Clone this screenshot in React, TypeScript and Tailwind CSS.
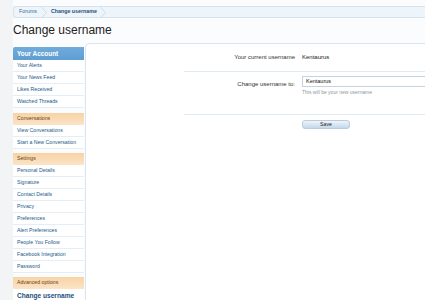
import React from "react";

const font = { fontFamily: '"Liberation Sans", Arial, sans-serif' };

function Chevron() {
  return (
    <svg width="6" height="11" viewBox="0 0 6 11" className="shrink-0">
      <polyline points="0.5,0 5.5,5.5 0.5,11" fill="none" stroke="#cfdde9" strokeWidth="1" />
    </svg>
  );
}

function Item({ children, last }: { children: React.ReactNode; last?: boolean }) {
  return (
    <div className={"h-[12px] flex items-center pl-[4px] text-[5.2px] text-[#1d5a8c] bg-white " + (last ? "" : "border-b border-[#e6eef5]")}>
      {children}
    </div>
  );
}

function SectionHead({ children, gap }: { children: React.ReactNode; gap: "a" | "b" }) {
  return (
    <div className={"h-[12px] flex items-center pl-[4px] text-[5.2px] text-[#6a3d12] bg-gradient-to-b from-[#f8d3a3] to-[#fbe4c8] " + (gap === "a" ? "mt-[5px]" : "mt-[4px]")}>
      {children}
    </div>
  );
}

export default function App() {
  return (
    <div className="w-[425px] h-[300px] overflow-hidden flex bg-[#f3f4f5]" style={font}>
      <div className="w-[13px] shrink-0" />
      <div className="flex-1 bg-[#fbfcfd] flex flex-col min-w-0">
        <div className="mt-[6px] h-[12px] rounded-l-[3px] border border-r-0 border-[#d6e2ec] bg-[#eef5fa] flex items-center">
          <span className="pl-[5px] pr-[4px] text-[5.3px] text-[#3a6d98]">Forums</span>
          <Chevron />
          <span className="pl-[4px] pr-[3px] text-[5.3px] text-[#24507a] font-bold">Change username</span>
          <Chevron />
        </div>
        <div className="mt-[5px] text-[12px] leading-[14px] text-[#222]">Change username</div>
        <div className="flex mt-[6px] flex-1">
          <div className="w-[71px] shrink-0 pt-[4px]">
            <div className="h-[13px] flex items-center pl-[4px] text-[6.4px] font-bold text-white bg-gradient-to-b from-[#70abdc] to-[#5f9ed2] rounded-tl-[2px]">
              Your Account
            </div>
            <Item>Your Alerts</Item>
            <Item>Your News Feed</Item>
            <Item>Likes Received</Item>
            <Item>Watched Threads</Item>
            <SectionHead gap="a">Conversations</SectionHead>
            <Item>View Conversations</Item>
            <Item>Start a New Conversation</Item>
            <SectionHead gap="b">Settings</SectionHead>
            <Item>Personal Details</Item>
            <Item>Signature</Item>
            <Item>Contact Details</Item>
            <Item>Privacy</Item>
            <Item>Preferences</Item>
            <Item>Alert Preferences</Item>
            <Item>People You Follow</Item>
            <Item>Facebook Integration</Item>
            <Item>Password</Item>
            <SectionHead gap="b">Advanced options</SectionHead>
            <div className="h-[13px] flex items-center pl-[4px] text-[6.6px] font-bold text-[#1d4f80] bg-white">
              Change username
            </div>
          </div>
          <div className="flex-1 ml-[1px] bg-white border-l border-t border-[#d9e6f0] rounded-tl-[5px] pl-[98px]">
            <div className="h-[28px] border-b border-[#e0ebf3] flex items-center">
              <div className="w-[118px] shrink-0 text-right pr-[7px] text-[6px] text-[#333]">Your current username</div>
              <div className="text-[6px] text-[#222]">Kentaurus</div>
            </div>
            <div className="h-[43px] border-b border-[#e0ebf3] flex">
              <div className="w-[118px] shrink-0 text-right pr-[7px] text-[6px] text-[#333] pt-[8px]">Change username to:</div>
              <div className="flex-1 pt-[4px]">
                <div className="h-[11px] border border-[#c5d3df] border-r-0 bg-white flex items-center pl-[3px] text-[5.5px] text-[#111]">
                  Kentaurus
                </div>
                <div className="mt-[2px] text-[5px] text-[#8a97a3]">This will be your new username</div>
              </div>
            </div>
            <div className="flex pt-[5px]">
              <div className="w-[118px] shrink-0" />
              <div className="w-[48px] h-[9px] rounded-[3px] border border-[#b9cde0] bg-gradient-to-b from-[#eef5fb] to-[#c5d8e8] flex items-center justify-center text-[5.2px] text-[#222]">
                Save
              </div>
            </div>
          </div>
        </div>
      </div>
    </div>
  );
}
